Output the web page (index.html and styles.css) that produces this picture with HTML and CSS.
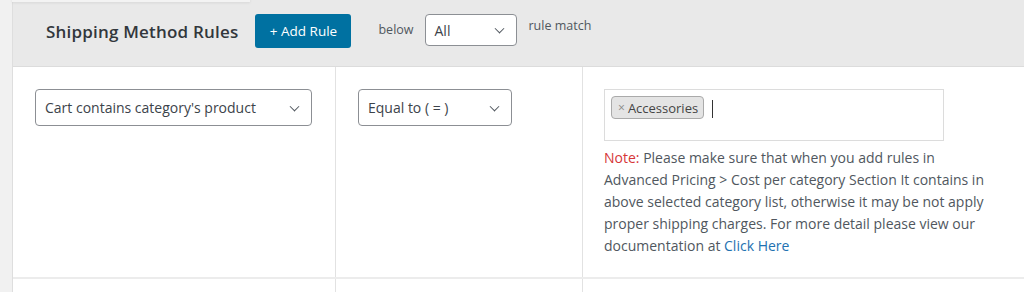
FILE: index.html
```html
<!DOCTYPE html>
<html lang="en">

<head>
  <meta charset="UTF-8" />
  <meta name="viewport" content="width=device-width, initial-scale=1.0"/>
  <title>Shipping Method Rules</title>
  <link rel="stylesheet" href="styles.css">
</head>

<body>

  <div class="wrap">
    <div class="shadow-tab"></div>

    <div class="panel">
      <!-- Header -->
      <div class="rules-head">
        <h2>Shipping Method Rules</h2>
        <button class="btn-add">+ Add Rule</button>
        <span class="lbl">below</span>
        <div class="select select-small">All<span class="chev"></span></div>
        <span class="lbl lbl-up">rule match</span>
      </div>

      <!-- Rule rows -->
      <div class="rule-row">
        <div class="cell cell-1">
          <div class="select select-cond">Cart contains category's product<span class="chev"></span></div>
        </div>
        <div class="cell cell-2">
          <div class="select select-op">Equal to ( = )<span class="chev"></span></div>
        </div>
        <div class="cell cell-3">
          <div class="multi">
            <span class="tag"><span class="x">×</span>Accessories</span>
            <span class="caret"></span>
          </div>
          <p class="note">
            <span class="note-label">Note:</span> Please make sure that when you add rules in Advanced Pricing &gt; Cost per category Section It contains in above selected category list, otherwise it may be not apply proper shipping charges. For more detail please view our documentation at <a href="#">Click Here</a>
          </p>
        </div>
      </div>

      <div class="rule-row rule-row-empty">
        <div class="cell cell-1"></div>
        <div class="cell cell-2"></div>
        <div class="cell cell-3"></div>
      </div>
    </div>
  </div>

</body>
</html>
```

FILE: styles.css
```css
:root {
  --text: #3c434a;
  --muted: #50575e;
  --blue: #0071a1;
  --border: #e2e2e2;
  --head-bg: #e9e9e9;
}

* {
  margin: 0;
  padding: 0;
  box-sizing: border-box;
  font-family: 'Open Sans', 'Noto Sans', sans-serif;
}

body {
  background: #f1f1f1;
  color: var(--text);
  overflow: hidden;
}

.wrap {
  position: relative;
  padding-left: 12px;
}

/* card edge peeking from above */
.shadow-tab {
  position: absolute;
  top: -8px;
  left: 12px;
  width: 238px;
  height: 10px;
  background: #f3f3f3;
  box-shadow: 0 1px 3px rgba(0, 0, 0, 0.08);
  z-index: 2;
}

.panel {
  border-left: 1px solid #dedede;
  background: #fff;
}

.rules-head {
  background: var(--head-bg);
  height: 67px;
  display: flex;
  align-items: flex-start;
  padding: 14px 0 0 33px;
  border-bottom: 1px solid #dcdcdc;
}

.rules-head h2 {
  font-size: 17px;
  font-weight: 600;
  color: #32373c;
  margin-top: 6px;
  letter-spacing: 0.2px;
}

.btn-add {
  margin-left: 17px;
  height: 34px;
  width: 96px;
  background: var(--blue);
  color: #fff;
  border: none;
  border-radius: 3px;
  font-size: 13.5px;
  font-family: 'Open Sans', sans-serif;
}

.lbl {
  font-size: 12.5px;
  color: var(--muted);
  margin: 7px 0 0 27px;
}

.lbl-up {
  margin: 3px 0 0 12px;
}

.select {
  position: relative;
  display: flex;
  align-items: center;
  background: #fff;
  border: 1px solid #8c8f94;
  border-radius: 4px;
  color: var(--text);
  font-size: 14px;
  padding-left: 9px;
}

.chev {
  position: absolute;
  right: 13px;
  top: 50%;
  width: 7px;
  height: 7px;
  border-right: 1.5px solid #50575e;
  border-bottom: 1.5px solid #50575e;
  transform: translateY(-70%) rotate(45deg);
}

.select-small {
  margin-left: 11px;
  width: 92px;
  height: 32px;
}

.rule-row {
  display: flex;
  border-bottom: 2px solid #ececec;
}

.cell {
  padding: 22px 22px 0 22px;
}

.cell-1 {
  width: 323px;
  border-right: 1px solid var(--border);
}

.cell-2 {
  width: 247px;
  border-right: 1px solid var(--border);
}

.cell-3 {
  flex: 1;
  padding-left: 21px;
  padding-bottom: 20px;
}

.select-cond {
  width: 277px;
  height: 37px;
}

.select-op {
  width: 154px;
  height: 37px;
}

.multi {
  width: 340px;
  height: 52px;
  border: 1px solid #dcdcdc;
  display: flex;
  align-items: flex-start;
  padding: 6px 0 0 6px;
}

.tag {
  display: inline-flex;
  align-items: center;
  height: 23px;
  padding: 0 5px 0 6px;
  background: #e4e4e4;
  border: 1px solid #aaa;
  border-radius: 4px;
  font-size: 13px;
  color: #444;
}

.tag .x {
  color: #888;
  font-size: 12px;
  margin-right: 3px;
}

.caret {
  width: 1px;
  height: 18px;
  background: #333;
  margin: 4px 0 0 8px;
}

.note {
  margin-top: 6px;
  width: 398px;
  font-size: 14px;
  line-height: 22px;
  color: var(--muted);
}

.note-label {
  color: #d63638;
}

.note a {
  color: #2271b1;
  text-decoration: none;
}

.rule-row-empty {
  height: 40px;
  border-bottom: none;
}
```
